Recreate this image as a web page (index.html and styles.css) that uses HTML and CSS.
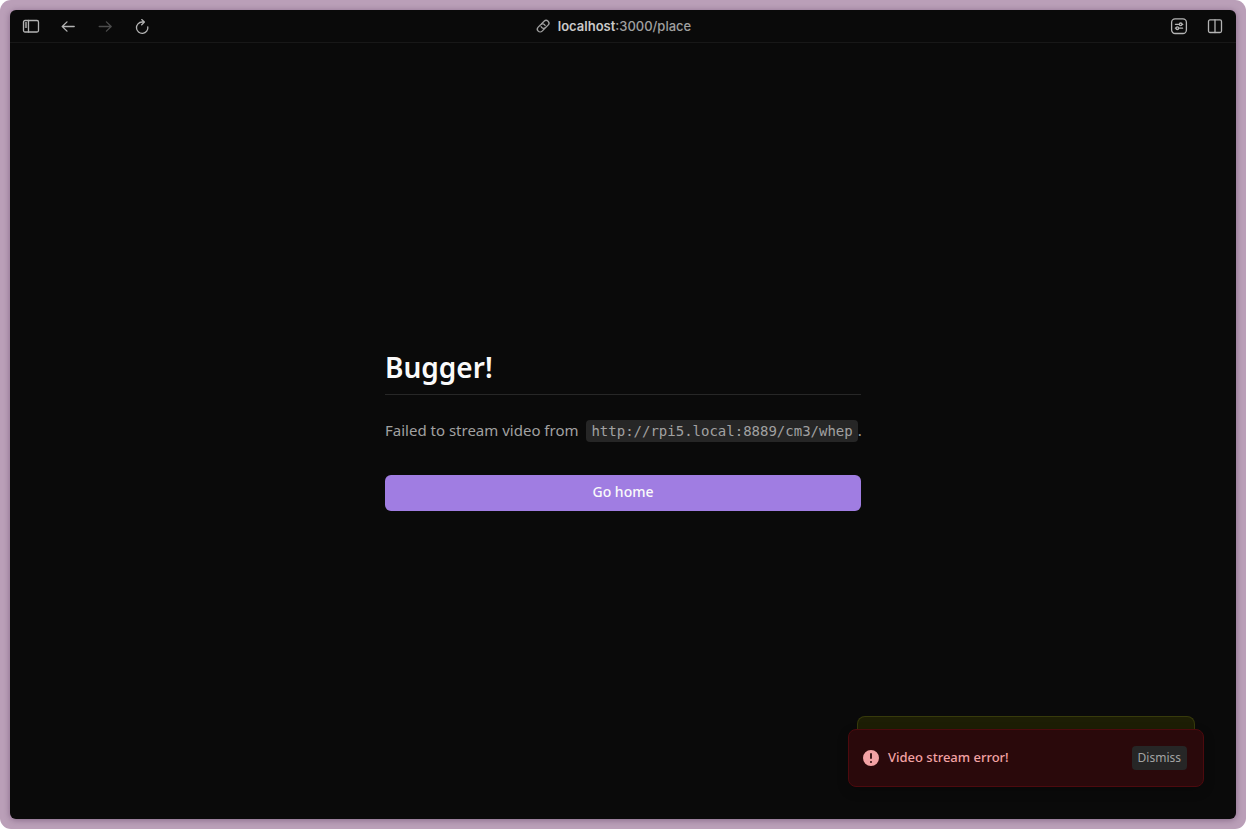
FILE: index.html
```html
<!DOCTYPE html>
<html lang="en">
<head>
<meta charset="utf-8">
<title>localhost:3000/place</title>
<link rel="stylesheet" href="styles.css">
</head>
<body>
<div class="frame">
  <div class="window">
    <header class="toolbar">
      <div class="tools tools-left">
        <button class="tool" aria-label="Toggle sidebar"><svg width="18" height="18" viewBox="0 0 18 18"><rect x="1.5" y="3.5" width="15" height="11.5" rx="1.5"/><path d="M6.5 3.5V15M3.4 6h1.2M3.4 8h1.2M3.4 10h1.2"/></svg></button>
        <button class="tool" aria-label="Back"><svg width="18" height="18" viewBox="0 0 18 18"><path d="M15.2 9.5H3.4M8 4.9 3.2 9.5 8 14.1"/></svg></button>
        <button class="tool" aria-label="Forward" disabled><svg width="18" height="18" viewBox="0 0 18 18"><path d="M3.2 9.5H15M10.4 4.9l4.8 4.6-4.8 4.6"/></svg></button>
        <button class="tool" aria-label="Reload"><svg width="18" height="18" viewBox="0 0 18 18"><path d="M14.8 9.8A5.7 5.7 0 1 1 9.1 5h2.2M8.7 2.6l2.7 2.5-2.7 2.7"/></svg></button>
      </div>
      <a class="address" href="#"><svg width="16" height="16" viewBox="0 0 16 16"><g transform="rotate(-45 8 8)"><path d="M7.4 11H3.8a2.8 2.8 0 0 1 0-5.6h3.4a2.8 2.8 0 0 1 2.6 3.8"/><path d="M8.6 5.4h3.6a2.8 2.8 0 0 1 0 5.6H8.8a2.8 2.8 0 0 1-2.6-3.8"/></g></svg><span><b>localhost</b>:3000/place</span></a>
      <div class="tools tools-right">
        <button class="tool" aria-label="Site settings"><svg width="18" height="18" viewBox="0 0 18 18"><rect x="1.6" y="1.9" width="14.8" height="14.6" rx="3.5"/><path d="M5.4 7.3h3.8M12.2 7.3h.6M5.4 11.2h.6M8.8 11.2h3.8"/><circle cx="10.7" cy="7.3" r="1.3"/><circle cx="7.3" cy="11.2" r="1.3"/></svg></button>
        <button class="tool" aria-label="Split view"><svg width="18" height="18" viewBox="0 0 18 18"><rect x="2.5" y="2.9" width="13" height="12.6" rx="1.5"/><path d="M9 2.9v12.6"/></svg></button>
      </div>
    </header>
    <main class="page">
      <section class="message">
        <h1 class="title">Bugger!</h1>
        <p class="detail">Failed to stream video from <code class="url">http://rpi5.local:8889/cm3/whep</code>.</p>
        <button class="primary">Go home</button>
      </section>
    </main>
    <div class="toasts">
      <div class="toast-behind"></div>
      <div class="toast" role="alert">
        <svg class="alert-icon" width="20" height="20" viewBox="0 0 20 20"><path fill-rule="evenodd" d="M18 10a8 8 0 1 1-16 0 8 8 0 0 1 16 0ZM10 5a.9.9 0 0 1 .9.9v4.2a.9.9 0 0 1-1.8 0V5.9A.9.9 0 0 1 10 5Zm0 10a1 1 0 1 0 0-2 1 1 0 0 0 0 2Z"/></svg>
        <span class="toast-text">Video stream error!</span>
        <button class="dismiss">Dismiss</button>
      </div>
    </div>
  </div>
</div>
</body>
</html>
```

FILE: styles.css
```css
* { box-sizing: border-box; }
body {
  margin: 0;
  background: #fff;
  font-family: "Noto Sans", "Open Sans", sans-serif;
}
button { border: 0; padding: 0; font: inherit; }
.frame {
  height: 100vh;
  padding: 10px;
  border-radius: 11px;
  background: #ba9fb8;
}
.window {
  position: relative;
  display: flex;
  flex-direction: column;
  height: 100%;
  border-radius: 6px;
  background: #0a0a0a;
  box-shadow: 0 1px 6px rgba(40, 10, 50, 0.35);
}
.toolbar {
  display: grid;
  grid-template-columns: 1fr auto 1fr;
  align-items: center;
  height: 33px;
  padding: 0 12px;
  border-bottom: 1px solid #181818;
}
.tools { display: flex; }
.tools-left { gap: 19px; }
.tools-right { gap: 18px; justify-content: flex-end; }
.tool {
  display: flex;
  background: none;
  color: #b4b4b4;
}
.tool:disabled { color: #4c4c4c; }
.tool svg, .address svg {
  fill: none;
  stroke: currentColor;
  stroke-width: 1.3;
  stroke-linecap: round;
  stroke-linejoin: round;
}
.address {
  display: flex;
  align-items: center;
  gap: 7px;
  padding-right: 20px;
  color: #a0a0a0;
  font-family: Inter, sans-serif;
  font-size: 13px;
  font-weight: 500;
  line-height: 16px;
  text-decoration: none;
}
.address b { color: #cacaca; font-weight: 600; }
.page {
  flex: 1;
  display: flex;
  align-items: center;
  justify-content: center;
}
.message {
  display: flex;
  flex-direction: column;
  width: 100%;
  max-width: 476px;
}
.title {
  margin: 0;
  padding-bottom: 11px;
  border-bottom: 1px solid #272727;
  color: #fafafa;
  font-size: 28px;
  font-weight: 600;
  line-height: 32px;
}
.detail {
  margin: 23px 0 33px;
  color: #a1a1a1;
  font-size: 15px;
  line-height: 24px;
  white-space: nowrap;
}
.url {
  margin-left: 4px;
  padding: 3px 5px;
  border-radius: 4px;
  background: #262626;
  font-family: "DejaVu Sans Mono", monospace;
  font-size: 14px;
  line-height: 16px;
}
.primary {
  height: 36px;
  padding-bottom: 3px;
  border-radius: 6px;
  background: #a07de2;
  color: #fafafa;
  font-size: 14px;
  font-weight: 500;
}
.toasts {
  position: absolute;
  right: 32px;
  bottom: 32px;
  width: 356px;
}
.toast-behind {
  height: 14px;
  margin: 0 9px -1px;
  border: 1px solid #373a0b;
  border-bottom: 0;
  border-radius: 8px 8px 0 0;
  background: #1d1e05;
}
.toast {
  position: relative;
  display: flex;
  align-items: center;
  height: 58px;
  padding: 0 16px 0 12px;
  border: 1px solid #4d0a0e;
  border-radius: 8px;
  background: #2a090b;
  color: #f3a2a4;
  box-shadow: 0 4px 12px rgba(0, 0, 0, 0.2);
}
.alert-icon { fill: currentColor; }
.toast-text {
  margin-left: 7px;
  padding-bottom: 2px;
  font-size: 13px;
  font-weight: 500;
  line-height: 20px;
}
.dismiss {
  height: 24px;
  margin-left: auto;
  padding: 0 6px 2px;
  border-radius: 4px;
  background: #262626;
  color: #a3a3a3;
  font-size: 12px;
}
```
